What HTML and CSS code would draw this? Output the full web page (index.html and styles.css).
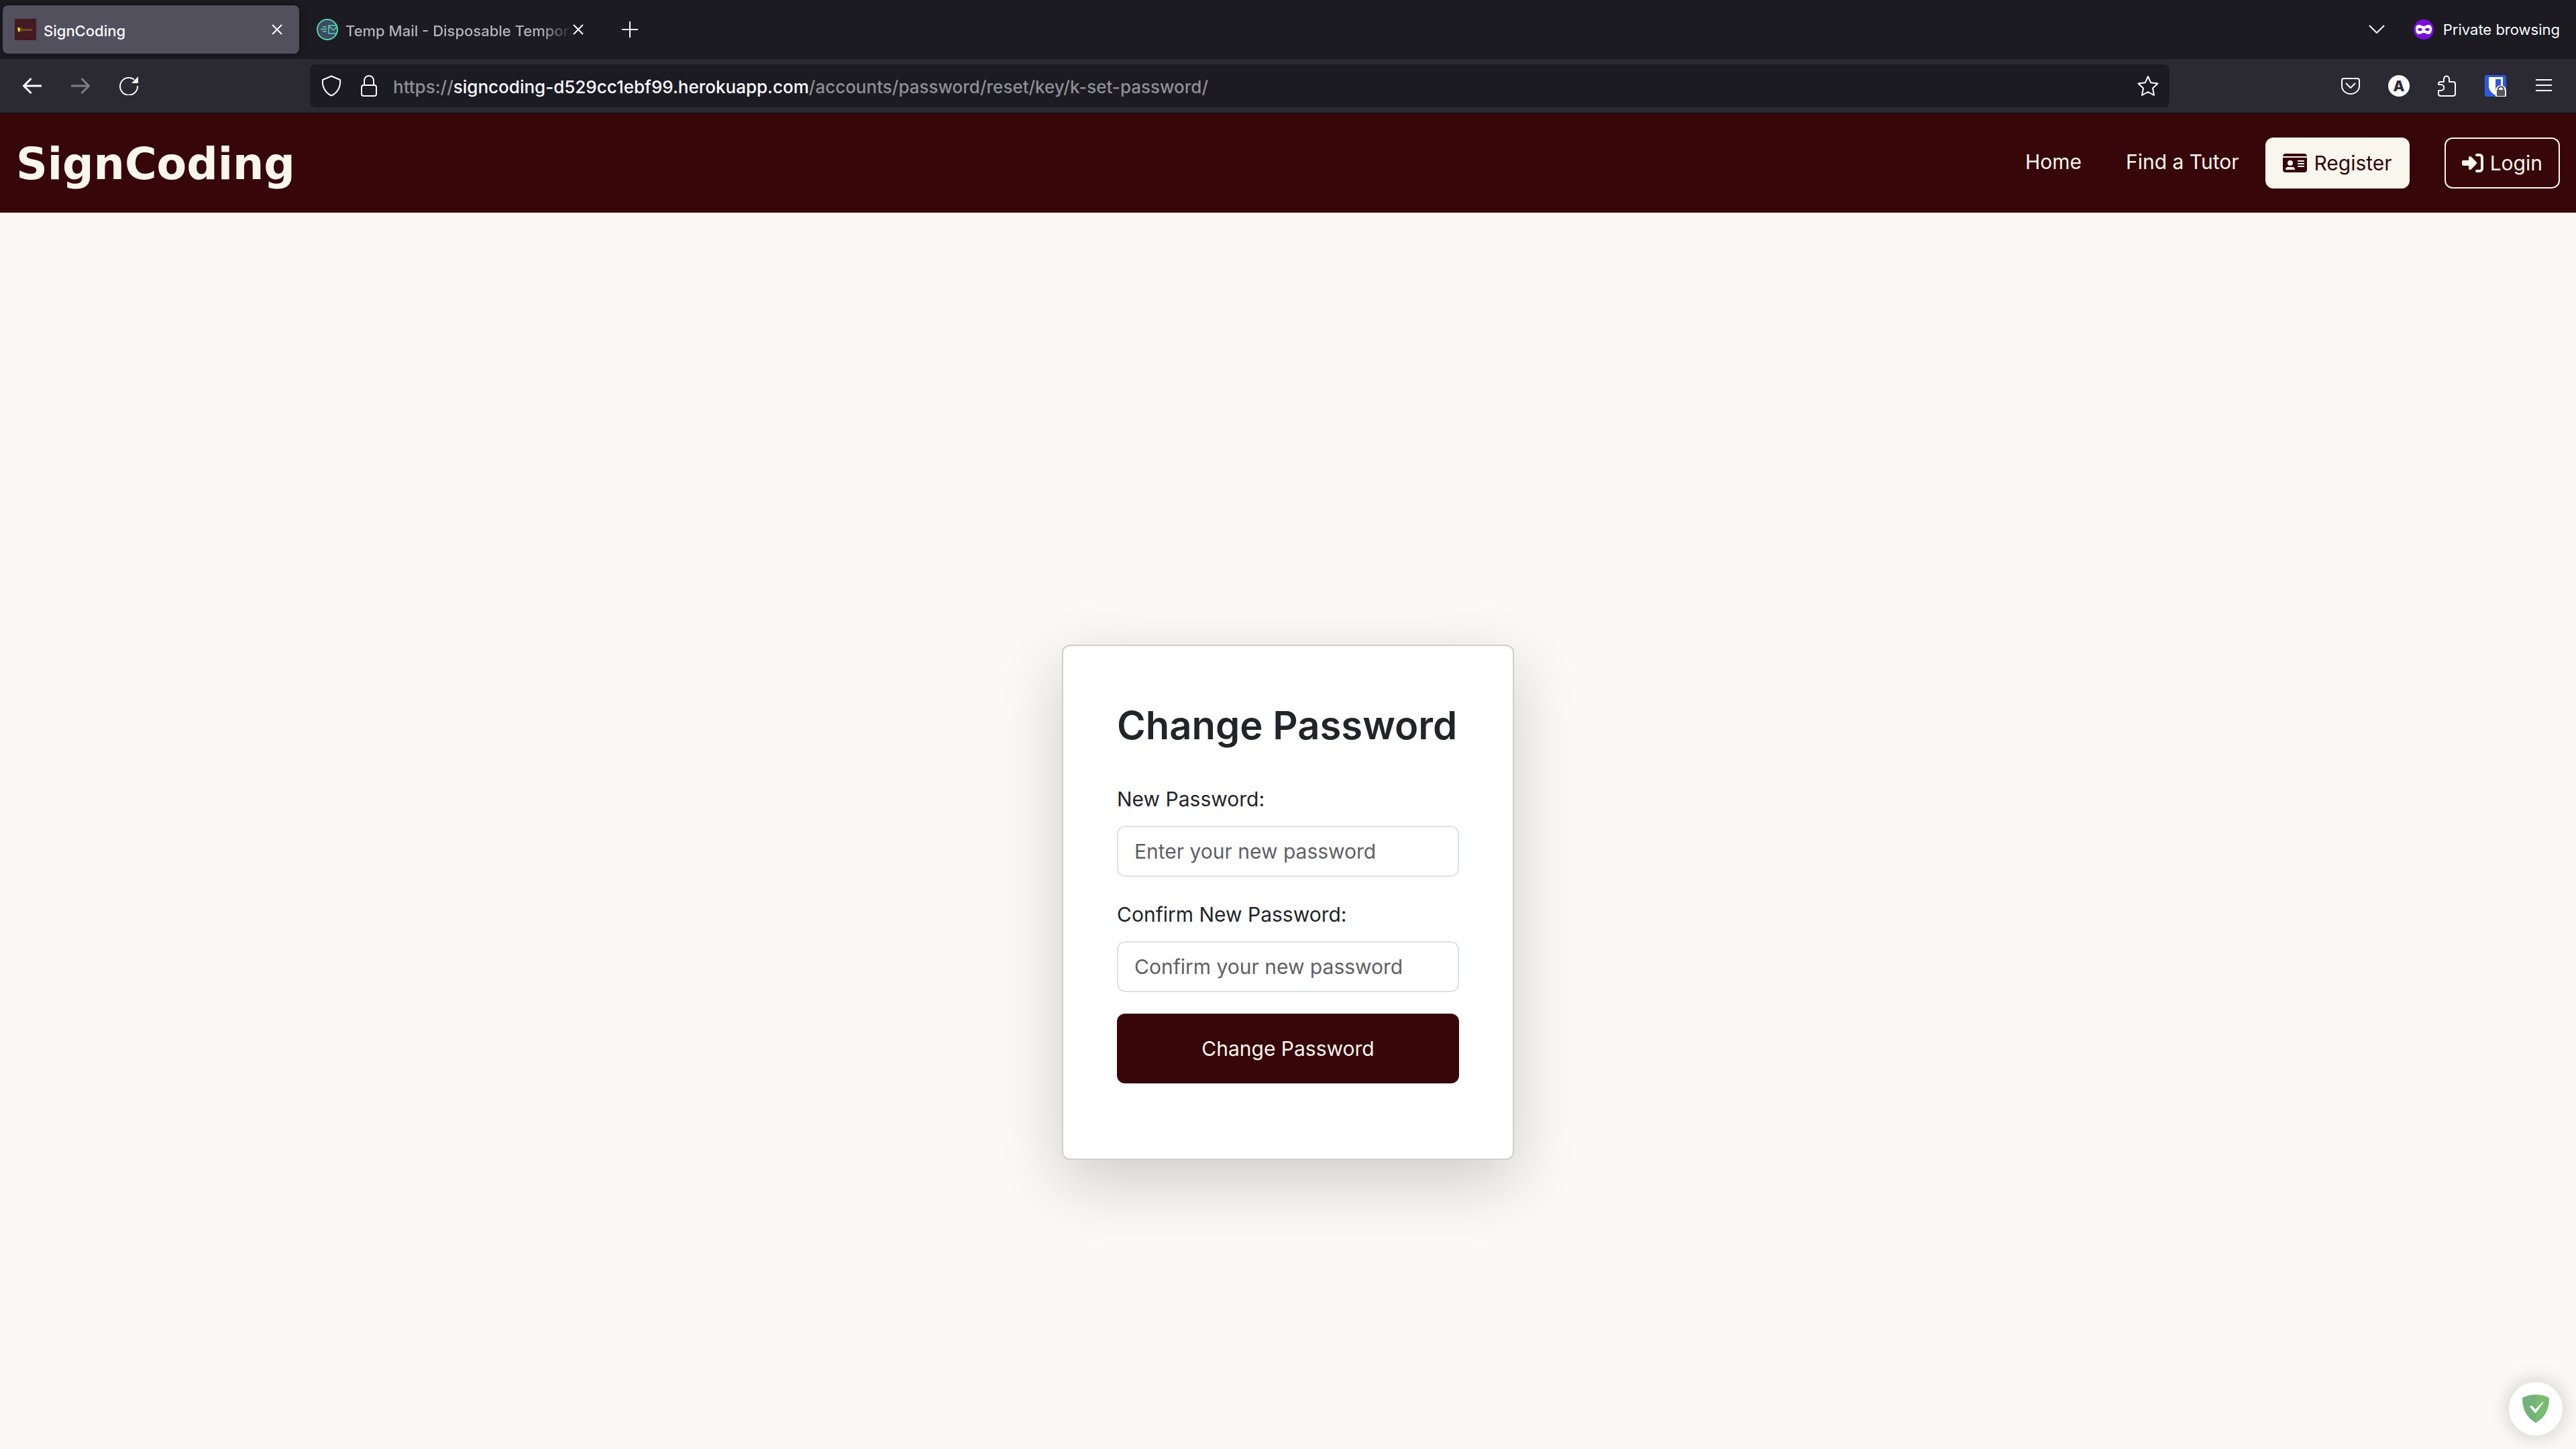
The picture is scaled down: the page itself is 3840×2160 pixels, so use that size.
FILE: index.html
```html
<!DOCTYPE html>
<html lang="en">
<head>
<meta charset="utf-8">
<title>SignCoding</title>
<link rel="stylesheet" href="styles.css">
</head>
<body>
<div class="browser">
  <div class="tabs">
    <div class="tab tab-active">
      <svg class="icon-32" viewBox="0 0 32 32"><path fill="#431a1f" d="M0 0h32v32H0z"/><g fill="none" stroke="#d9c92b" stroke-width="1"><path d="M9.500 12v8" opacity=".5"/><path d="M11 16.500h16" stroke-width="3" stroke-dasharray="1 1" opacity=".55"/></g><path fill="#f3e12a" d="M4 14c1-2 4-1 4 1v3l-2 2-1-2z"/></svg>
      <span class="tab-title">SignCoding</span>
      <button class="icon-button" aria-label="Close tab"><svg class="icon-16" viewBox="0 0 16 16"><path class="line" d="M1 1l14 14M15 1L1 15"/></svg></button>
    </div>
    <div class="tab">
      <svg class="icon-32" viewBox="0 0 32 32"><circle cx="16" cy="16" r="15" fill="#3c4a63" stroke="#55d3ab" stroke-width="2"/><path fill="none" stroke="#55d3ab" stroke-width="1.500" d="M9 12h6M6 15.500h9M9 19h6M30 10H18v12h11M18 11l7 6 5-5"/></svg>
      <span class="tab-title tab-title-faded">Temp Mail - Disposable Tempora</span>
      <button class="icon-button" aria-label="Close tab"><svg class="icon-16" viewBox="0 0 16 16"><path class="line" d="M1 1l14 14M15 1L1 15"/></svg></button>
    </div>
    <button class="icon-button new-tab" aria-label="New tab"><svg class="icon-24" viewBox="0 0 24 24"><path class="line" d="M12 0v24M0 12h24"/></svg></button>
    <div class="window-tools">
      <button class="icon-button" aria-label="List tabs"><svg class="icon-24" viewBox="0 0 24 24"><path class="line" d="M1 6l11 11L23 6"/></svg></button>
      <span class="private"><svg class="icon-30" viewBox="0 0 30 30"><circle cx="15" cy="15" r="15" fill="#7a0fdb"/><path fill="#fff" fill-rule="evenodd" d="M3 14c0-4 2-6 5-6 3 0 4 2 7 2s4-2 7-2c3 0 5 2 5 6 0 5-2 8-5 8-3 0-4-2-7-2s-4 2-7 2c-3 0-5-3-5-8zm3 1c1 3 6 3 7 0-1-3-6-3-7 0zm11 0c1 3 6 3 7 0-1-3-6-3-7 0z"/></svg>Private browsing</span>
    </div>
  </div>
  <div class="toolbar">
    <div class="history">
      <button class="icon-button" aria-label="Back"><svg class="icon-28" viewBox="0 0 28 28"><path class="line thick" d="M28 14H2M12.500 3L1.500 14l11 11"/></svg></button>
      <button class="icon-button" aria-label="Forward" disabled><svg class="icon-28" viewBox="0 0 28 28"><path class="line thick" d="M0 14h26M15.500 3l11 11-11 11"/></svg></button>
      <button class="icon-button" aria-label="Reload"><svg class="icon-28" viewBox="0 0 28 28"><path class="line" d="M22 4.500A13 13 0 1 0 27 14"/><path fill="currentColor" d="M28 0v10H18z"/></svg></button>
    </div>
    <div class="address">
      <svg class="icon-32" viewBox="0 0 32 32"><path class="line" d="M16 1.500L29 7c1 9-3 19-13 23.500C6 26 2 16 3 7z"/></svg>
      <svg class="icon-32 lock" viewBox="0 0 32 32"><rect class="line" x="5" y="15" width="22" height="16" rx="3"/><path class="line" d="M9 15V8a7 7 0 0 1 14 0v7"/></svg>
      <div class="url" role="textbox" aria-label="Address">https://<span class="url-host">signcoding-d529cc1ebf99.herokuapp.com</span>/accounts/password/reset/key/k-set-password/</div>
      <button class="icon-button" aria-label="Bookmark"><svg class="icon-32" viewBox="0 0 32 32"><path class="line" d="M16 2l4.200 9.300L30.500 12.500 23 19.500l2 10.500-9-5-9 5 2-10.500-7.500-7 10.300-1.200z"/></svg></button>
    </div>
    <div class="extensions">
      <button class="icon-button" aria-label="Pocket"><svg class="icon-32" viewBox="0 0 32 32"><path class="line" d="M6 5h20c2 0 3 1 3 3v8c0 7-6 12-13 12S3 23 3 16V8c0-2 1-3 3-3z"/><path class="line" d="M9 12l7 7 7-7"/></svg></button>
      <button class="icon-button avatar" aria-label="Account">A</button>
      <button class="icon-button" aria-label="Extensions"><svg class="icon-32" viewBox="0 0 32 32"><path class="line" d="M6 31c-2 0-3-1-3-3v-5h3c7 0 7-9 0-9H3v-1c0-2 1-3 3-3h5V6c0-6 8-6 8 0v4h6c2 0 3 1 3 3v15c0 2-1 3-3 3z"/></svg></button>
      <button class="icon-button" aria-label="Password manager"><svg class="icon-32" viewBox="0 0 32 32"><rect width="32" height="32" rx="3" fill="#3059dc"/><path fill="#fff" d="M6 3h21v14c0 6-5 10-11 13C10 27 6 22 6 16z"/><path fill="#3059dc" d="M16 6h8v11c0 4-4 7-8 9z"/><path fill="#f0f0f0" d="M16 32v-8c0-12 16-12 16 0v8z"/><rect x="18" y="22" width="12" height="9" rx="1" fill="#555"/><path fill="none" stroke="#555" stroke-width="2" d="M20 23v-2c0-5 8-5 8 0v2"/></svg></button>
      <button class="icon-button" aria-label="Menu"><svg class="icon-32" viewBox="0 0 32 32"><path class="line" d="M4 7h24M4 15h24M4 23h24"/></svg></button>
    </div>
  </div>
</div>
<header class="navbar">
  <a class="brand" href="#">SignCoding</a>
  <nav class="nav">
    <a class="nav-link" href="#">Home</a>
    <a class="nav-link" href="#">Find a Tutor</a>
    <a class="nav-button nav-button-solid" href="#"><svg class="icon-card" viewBox="0 0 576 512"><path fill="currentColor" d="M0 96l576 0c0-35.300-28.700-64-64-64L64 32C28.700 32 0 60.700 0 96zm0 32L0 416c0 35.300 28.700 64 64 64l448 0c35.300 0 64-28.700 64-64l0-288L0 128zM64 405.300c0-29.500 23.900-53.300 53.300-53.300l117.300 0c29.500 0 53.300 23.900 53.300 53.300c0 5.900-4.800 10.700-10.700 10.700L74.700 416c-5.900 0-10.700-4.800-10.700-10.700zM176 192a64 64 0 1 1 0 128 64 64 0 1 1 0-128zm176 16c0-8.800 7.200-16 16-16l128 0c8.800 0 16 7.200 16 16s-7.200 16-16 16l-128 0c-8.800 0-16-7.200-16-16zm0 64c0-8.800 7.200-16 16-16l128 0c8.800 0 16 7.200 16 16s-7.200 16-16 16l-128 0c-8.800 0-16-7.200-16-16zm0 64c0-8.800 7.200-16 16-16l128 0c8.800 0 16 7.200 16 16s-7.200 16-16 16l-128 0c-8.800 0-16-7.200-16-16z"/></svg>Register</a>
    <a class="nav-button" href="#"><svg class="icon-32" viewBox="0 0 512 512"><path fill="currentColor" d="M217.900 105.900L340.700 228.700c7.200 7.200 11.300 17.100 11.300 27.300s-4.100 20.100-11.300 27.300L217.900 406.100c-6.400 6.400-15 9.900-24 9.900c-18.700 0-33.900-15.200-33.900-33.900l0-62.100L32 320c-17.700 0-32-14.300-32-32l0-64c0-17.700 14.300-32 32-32l128 0 0-62.100c0-18.700 15.200-33.900 33.900-33.900c9 0 17.600 3.600 24 9.900zM352 416l64 0c17.700 0 32-14.300 32-32l0-256c0-17.700-14.300-32-32-32l-64 0c-17.700 0-32-14.300-32-32s14.300-32 32-32l64 0c53 0 96 43 96 96l0 256c0 53-43 96-96 96l-64 0c-17.700 0-32-14.300-32-32s14.300-32 32-32z"/></svg>Login</a>
  </nav>
</header>
<main class="page">
  <form class="card">
    <h1 class="card-title">Change Password</h1>
    <label class="label" for="new-password">New Password:</label>
    <input class="field" id="new-password" type="password" placeholder="Enter your new password">
    <label class="label" for="confirm-password">Confirm New Password:</label>
    <input class="field" id="confirm-password" type="password" placeholder="Confirm your new password">
    <button class="submit" type="button">Change Password</button>
  </form>
</main>
<button class="guard" aria-label="Protection status"><svg class="guard-icon" viewBox="0 0 40 42"><path fill="#74b27a" d="M20 0C13 0 6 1 0 5c0 17 6 29 20 37z"/><path fill="#77bc70" d="M20 0c7 0 14 1 20 5 0 17-6 29-20 37z"/><path fill="#fff" d="M11 18c1-2 4-2 5 0l3.500 4L30 11h2L19.500 28z"/></svg></button>
</body>
</html>
```
FILE: styles.css
```css
* {
  box-sizing: border-box;
}

body {
  margin: 0;
  min-height: 100vh;
  display: flex;
  flex-direction: column;
  background: #faf9f5;
  color: #212529;
  font-family: Inter, "Liberation Sans", sans-serif;
  font-size: 30px;
  line-height: 48px;
}

button,
input {
  font: inherit;
}

a {
  text-decoration: none;
}

svg {
  display: block;
  flex: none;
}

.line {
  fill: none;
  stroke: currentColor;
  stroke-width: 2;
  stroke-linejoin: round;
}

.thick {
  stroke-width: 3;
}

.icon-16 { width: 16px; height: 16px; }
.icon-24 { width: 24px; height: 24px; }
.icon-28 { width: 28px; height: 28px; }
.icon-30 { width: 30px; height: 30px; }
.icon-32 { width: 32px; height: 32px; }
.icon-card { width: 36px; height: 32px; }

/* Browser chrome */
.browser {
  color: #fbfbfe;
  border-bottom: 1px solid #0c0c0d;
}

.icon-button {
  display: flex;
  padding: 0;
  border: 0;
  background: none;
  color: inherit;
}

.icon-button:disabled {
  opacity: 0.4;
}

.tabs {
  display: flex;
  align-items: center;
  height: 88px;
  padding: 0 24px 0 4px;
  background: #1c1b22;
  font-size: 22px;
  line-height: 32px;
}

.tab {
  display: flex;
  align-items: center;
  width: 442px;
  height: 72px;
  padding: 0 18px 0 26px;
  color: #fbfbfe;
  font-weight: 500;
}

.tab .icon-32 {
  margin-right: 11px;
}

.tab-active {
  padding: 0 25px 0 18px;
  border-radius: 8px;
  background: #52505d;
  box-shadow: 0 0 8px rgba(0, 0, 0, 0.5);
}

.tab-title {
  flex: 1;
  min-width: 0;
  padding-top: 4px;
  white-space: nowrap;
}

.tab-title-faded {
  color: #b3b2b8;
  mask-image: linear-gradient(to left, transparent, #000 48px);
}

.new-tab {
  margin-left: 39px;
}

.window-tools {
  display: flex;
  align-items: center;
  gap: 43px;
  margin-left: auto;
}

.private {
  display: flex;
  align-items: center;
  gap: 14px;
}

.toolbar {
  display: flex;
  align-items: center;
  height: 80px;
  padding: 0 32px 0 34px;
  background: #2b2a33;
}

.history {
  display: flex;
  gap: 44px;
  margin-right: 256px;
}

.address {
  flex: 1;
  display: flex;
  align-items: center;
  height: 64px;
  padding: 0 16px;
  border-radius: 8px;
  background: #1c1b22;
}

.lock {
  margin: 0 20px 0 24px;
}

.url {
  flex: 1;
  padding-top: 4px;
  color: #8f8f95;
  font-size: 26px;
  font-weight: 500;
  line-height: 32px;
  white-space: nowrap;
}

.url-host {
  color: #fbfbfe;
}

.extensions {
  display: flex;
  align-items: center;
  gap: 40px;
  margin-left: 254px;
}

.avatar {
  justify-content: center;
  width: 32px;
  border-radius: 50%;
  background: #fbfbfe;
  color: #2b2a33;
  font-size: 22px;
  font-weight: 800;
  line-height: 32px;
}

/* Site header */
.navbar {
  display: flex;
  align-items: center;
  justify-content: space-between;
  height: 148px;
  padding: 0 24px;
  background: #360609;
  color: #f9f6ed;
}

.brand {
  padding-top: 4px;
  color: inherit;
  font-family: "DejaVu Sans", sans-serif;
  font-size: 65px;
  font-weight: 700;
}

.nav {
  display: flex;
  align-items: center;
}

.nav-link {
  margin-left: 34px;
  padding: 0 16px 4px;
  color: inherit;
}

.nav-button {
  display: flex;
  align-items: center;
  gap: 10px;
  height: 76px;
  padding: 0 24px;
  border: 2px solid #f9f6ed;
  border-radius: 12px;
  color: inherit;
}

.nav-button-solid {
  margin: 0 52px 0 24px;
  background: #f9f6ed;
  color: #360609;
}

/* Password form */
.page {
  flex: 1;
  display: flex;
  align-items: center;
  justify-content: center;
  padding-top: 212px;
}

.card {
  display: flex;
  flex-direction: column;
  width: 674px;
  padding: 80px 80px 112px;
  border: 2px solid #cfcfd0;
  border-radius: 12px;
  background: #fff;
  box-shadow: 0 32px 96px rgba(0, 0, 0, 0.175);
}

.card-title {
  margin: 0 0 48px;
  font-size: 58px;
  font-weight: 600;
  line-height: 76px;
  white-space: nowrap;
}

.label {
  margin-bottom: 16px;
}

.field {
  width: 100%;
  height: 76px;
  margin-bottom: 32px;
  padding: 0 24px;
  border: 2px solid #dee2e6;
  border-radius: 12px;
  background: #fff;
  color: #212529;
}

.field::placeholder {
  color: #5f6063;
  opacity: 1;
}

.submit {
  height: 104px;
  border: 0;
  border-radius: 12px;
  background: #360609;
  color: #f9f6ed;
}

/* Floating protection badge */
.guard {
  position: fixed;
  right: 20px;
  bottom: 20px;
  display: flex;
  align-items: center;
  justify-content: center;
  width: 80px;
  height: 80px;
  padding: 0;
  border: 0;
  border-radius: 50%;
  background: #fff;
  box-shadow: 0 0 32px rgba(0, 0, 0, 0.2);
}

.guard-icon {
  width: 40px;
  height: 42px;
}
```
